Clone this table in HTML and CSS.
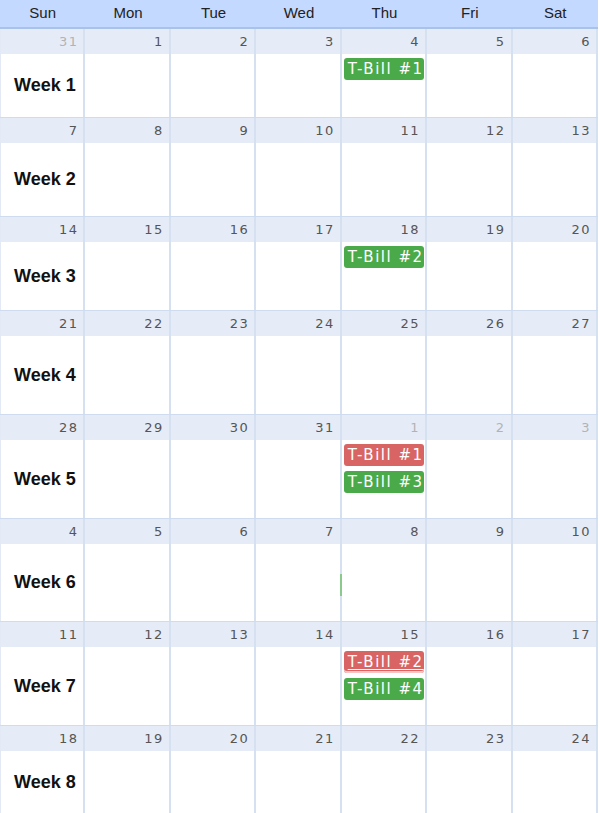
FILE: index.html
```html
<!DOCTYPE html>
<html>
<head>
<meta charset="utf-8">
<link rel="stylesheet" href="styles.css">
</head>
<body>
<div class="cal">
  <div class="head">
    <div>Sun</div><div>Mon</div><div>Tue</div><div>Wed</div><div>Thu</div><div>Fri</div><div>Sat</div>
  </div>

  <div class="week w1">
    <div class="day"><div class="num other">31</div><div class="body"><span class="wk">Week 1</span></div></div>
    <div class="day"><div class="num">1</div><div class="body"></div></div>
    <div class="day"><div class="num">2</div><div class="body"></div></div>
    <div class="day"><div class="num">3</div><div class="body"></div></div>
    <div class="day"><div class="num">4</div><div class="body"><div class="ev green">T-Bill #1</div></div></div>
    <div class="day"><div class="num">5</div><div class="body"></div></div>
    <div class="day"><div class="num">6</div><div class="body"></div></div>
  </div>

  <div class="week w2">
    <div class="day"><div class="num">7</div><div class="body"><span class="wk">Week 2</span></div></div>
    <div class="day"><div class="num">8</div><div class="body"></div></div>
    <div class="day"><div class="num">9</div><div class="body"></div></div>
    <div class="day"><div class="num">10</div><div class="body"></div></div>
    <div class="day"><div class="num">11</div><div class="body"></div></div>
    <div class="day"><div class="num">12</div><div class="body"></div></div>
    <div class="day"><div class="num">13</div><div class="body"></div></div>
  </div>

  <div class="week w3">
    <div class="day"><div class="num">14</div><div class="body"><span class="wk">Week 3</span></div></div>
    <div class="day"><div class="num">15</div><div class="body"></div></div>
    <div class="day"><div class="num">16</div><div class="body"></div></div>
    <div class="day"><div class="num">17</div><div class="body"></div></div>
    <div class="day"><div class="num">18</div><div class="body"><div class="ev green">T-Bill #2</div></div></div>
    <div class="day"><div class="num">19</div><div class="body"></div></div>
    <div class="day"><div class="num">20</div><div class="body"></div></div>
  </div>

  <div class="week w4">
    <div class="day"><div class="num">21</div><div class="body"><span class="wk">Week 4</span></div></div>
    <div class="day"><div class="num">22</div><div class="body"></div></div>
    <div class="day"><div class="num">23</div><div class="body"></div></div>
    <div class="day"><div class="num">24</div><div class="body"></div></div>
    <div class="day"><div class="num">25</div><div class="body"></div></div>
    <div class="day"><div class="num">26</div><div class="body"></div></div>
    <div class="day"><div class="num">27</div><div class="body"></div></div>
  </div>

  <div class="week w5">
    <div class="day"><div class="num">28</div><div class="body"><span class="wk">Week 5</span></div></div>
    <div class="day"><div class="num">29</div><div class="body"></div></div>
    <div class="day"><div class="num">30</div><div class="body"></div></div>
    <div class="day"><div class="num">31</div><div class="body"></div></div>
    <div class="day"><div class="num other">1</div><div class="body"><div class="ev red">T-Bill #1</div><div class="ev green">T-Bill #3</div></div></div>
    <div class="day"><div class="num other">2</div><div class="body"></div></div>
    <div class="day"><div class="num other">3</div><div class="body"></div></div>
  </div>

  <div class="week w6">
    <div class="day"><div class="num">4</div><div class="body"><span class="wk">Week 6</span></div></div>
    <div class="day"><div class="num">5</div><div class="body"></div></div>
    <div class="day"><div class="num">6</div><div class="body"></div></div>
    <div class="day"><div class="num">7</div><div class="body"></div></div>
    <div class="day"><div class="num">8</div><div class="body"><span class="sliver"></span></div></div>
    <div class="day"><div class="num">9</div><div class="body"></div></div>
    <div class="day"><div class="num">10</div><div class="body"></div></div>
  </div>

  <div class="week w7">
    <div class="day"><div class="num">11</div><div class="body"><span class="wk">Week 7</span></div></div>
    <div class="day"><div class="num">12</div><div class="body"></div></div>
    <div class="day"><div class="num">13</div><div class="body"></div></div>
    <div class="day"><div class="num">14</div><div class="body"></div></div>
    <div class="day"><div class="num">15</div><div class="body"><div class="ev red sel">T-Bill #2</div><div class="ev green">T-Bill #4</div></div></div>
    <div class="day"><div class="num">16</div><div class="body"></div></div>
    <div class="day"><div class="num">17</div><div class="body"></div></div>
  </div>

  <div class="week w8">
    <div class="day"><div class="num">18</div><div class="body"><span class="wk">Week 8</span></div></div>
    <div class="day"><div class="num">19</div><div class="body"></div></div>
    <div class="day"><div class="num">20</div><div class="body"></div></div>
    <div class="day"><div class="num">21</div><div class="body"></div></div>
    <div class="day"><div class="num">22</div><div class="body"></div></div>
    <div class="day"><div class="num">23</div><div class="body"></div></div>
    <div class="day"><div class="num">24</div><div class="body"></div></div>
  </div>
</div>
</body>
</html>
```

FILE: styles.css
```css
html, body {
  margin: 0;
  padding: 0;
  background: #ffffff;
  overflow: hidden;
}

.cal {
  width: 598px;
  font-family: "Liberation Sans", Arial, sans-serif;
}

.head {
  display: grid;
  grid-template-columns: repeat(7, 1fr);
  height: 27px;
  background: #c3d9ff;
  border-bottom: 2px solid #a9c2e8;
}

.head div {
  text-align: center;
  font-size: 15px;
  line-height: 26px;
  color: #222222;
}

.week {
  display: grid;
  grid-template-columns: repeat(7, 1fr);
}

.w1 { height: 88px; }
.w2 { height: 98px; }
.w3 { height: 93px; }
.w4 { height: 103px; }
.w5 { height: 103px; }
.w6 { height: 102px; }
.w7 { height: 103px; }
.w8 { height: 87px; }

.week + .week {
  border-top: 1px solid #cfdcef;
}

.day {
  display: flex;
  flex-direction: column;
  border-right: 2px solid #d5e0f1;
  min-width: 0;
}

.day:first-child {
  border-left: 1px solid #e3eaf5;
}

.num {
  height: 25px;
  background: #e6ecf7;
  text-align: right;
  padding-right: 5px;
  font-family: "DejaVu Sans", Verdana, sans-serif;
  font-size: 13px;
  letter-spacing: 1.5px;
  line-height: 25px;
  color: #555555;
}

.num.other {
  color: #b3b3b3;
}

.body {
  flex: 1;
  display: flex;
  flex-direction: column;
  gap: 5px;
  padding: 4px 1px 0 2px;
  position: relative;
}

.wk {
  margin: auto 0 auto 11px;
  font-weight: bold;
  font-size: 18px;
  color: #111111;
  position: relative;
  top: -2px;
}

.ev {
  height: 22px;
  border-radius: 3px;
  color: #ffffff;
  font-family: "DejaVu Sans", Verdana, sans-serif;
  font-size: 15px;
  letter-spacing: 1.5px;
  line-height: 22px;
  padding-left: 4px;
  white-space: nowrap;
  overflow: hidden;
}

.ev.green { background: #4aaa4a; }
.ev.red { background: #d96464; }

.ev.sel {
  text-decoration: underline;
  text-decoration-thickness: 1px;
  text-underline-offset: 2px;
  box-shadow: inset 0 -2px 0 #f4c6c6;
}

.sliver {
  position: absolute;
  left: -2px;
  top: 30px;
  width: 2px;
  height: 22px;
  background: #8cc98c;
}
```
